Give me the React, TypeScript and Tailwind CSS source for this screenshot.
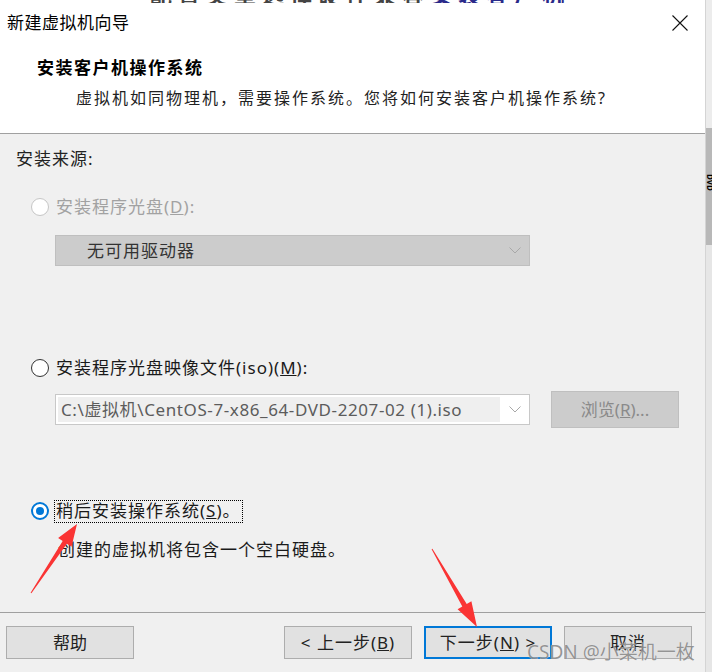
import React from "react";

const CJK = "font-['Noto_Sans','Noto_Sans_CJK_SC',sans-serif]";

function Radio({ state }: { state: "disabled" | "off" | "on" }) {
  if (state === "on")
    return (
      <div className="w-[18px] h-[18px] rounded-full border-2 border-[#0078d7] bg-white flex items-center justify-center shrink-0">
        <div className="w-[8px] h-[8px] rounded-full bg-[#0078d7]" />
      </div>
    );
  return (
    <div
      className={
        "w-[18px] h-[18px] rounded-full bg-white shrink-0 " +
        (state === "disabled" ? "border border-[#c6c6c6]" : "border-[1.5px] border-[#333333]")
      }
    />
  );
}

function Chevron({ color }: { color: string }) {
  return (
    <svg width="12" height="7" viewBox="0 0 12 7" className="shrink-0">
      <polyline points="0.5,0.5 6,6 11.5,0.5" fill="none" stroke={color} strokeWidth="1" />
    </svg>
  );
}

export default function App() {
  return (
    <div className={"relative w-[712px] h-[672px] overflow-hidden flex bg-white text-[17px] " + CJK}>
      {/* main window */}
      <div className="w-[705px] h-full flex flex-col shrink-0">
        {/* background text strip */}
        <div className="h-[3px] overflow-hidden bg-white">
          <div className="-mt-[17px] pl-[150px] text-[22px] font-bold leading-[22px] tracking-[6px] whitespace-nowrap">
            <span className="text-[#444]">配置类型选择硬件兼容</span>
            <span className="text-[#2a2a8a]">安装客户机</span>
          </div>
        </div>
        {/* title + header */}
        <div className="h-[131px] bg-white border-b border-[#a0a0a0] flex flex-col">
          <div className="h-[40px] flex items-center justify-between pl-[7px] pr-[17px]">
            <span className="text-[17px] text-black tracking-[0.5px]">新建虚拟机向导</span>
            <svg width="16" height="16" viewBox="0 0 16 16">
              <path d="M0.5 0.5 L15.5 15.5 M15.5 0.5 L0.5 15.5" stroke="#111" strokeWidth="1.1" />
            </svg>
          </div>
          <div className="pl-[37px] mt-[14px] text-[17px] font-bold text-black tracking-[1.5px] leading-[22px]">
            安装客户机操作系统
          </div>
          <div className="pl-[76px] mt-[8px] text-[16px] text-[#222] tracking-[2px] leading-[22px]">
            虚拟机如同物理机，需要操作系统。您将如何安装客户机操作系统?
          </div>
        </div>
        {/* body */}
        <div className="h-[479px] bg-[#f0f0f0] border-b border-[#a0a0a0] flex flex-col">
          <div className="pl-[16px] mt-[14px] leading-[22px] text-[#222] tracking-[1px]">安装来源:</div>

          <div className="flex items-center gap-[7px] pl-[31px] mt-[26px] h-[22px]">
            <Radio state="disabled" />
            <span className="text-[#a2a2a2] tracking-[1px]">
              安装程序光盘(<u>D</u>):
            </span>
          </div>
          <div className="ml-[55px] mt-[17px] w-[475px] h-[31px] bg-[#cccccc] border border-[#bfbfbf] flex items-center justify-between pl-[31px] pr-[8px]">
            <span className="text-[#333] tracking-[1px]">无可用驱动器</span>
            <Chevron color="#a8a8a8" />
          </div>

          <div className="flex items-center gap-[7px] pl-[31px] mt-[91px] h-[22px]">
            <Radio state="off" />
            <span className="text-[#1a1a1a] tracking-[1px]">
              安装程序光盘映像文件(iso)(<u>M</u>):
            </span>
          </div>
          <div className="flex items-center mt-[12px] h-[37px]">
            <div className="ml-[55px] w-[475px] h-[31px] bg-white border border-[#c8c8c8] flex items-center pr-[8px]">
              <div className="ml-[2px] w-[442px] h-[25px] bg-[#efefef] flex items-center pl-[3px] text-[#5c5c5c] text-[17px] tracking-[0.6px] whitespace-nowrap overflow-hidden">
                C:\虚拟机\CentOS-7-x86_64-DVD-2207-02 (1).iso
              </div>
              <div className="flex-1" />
              <Chevron color="#a8a8a8" />
            </div>
            <div className="ml-[21px] w-[128px] h-[37px] bg-[#cccccc] border border-[#bfbfbf] flex items-center justify-center text-[#8a8a8a]">
              浏览(<u>R</u>)...
            </div>
          </div>

          <div className="flex items-center gap-[5px] pl-[31px] mt-[71px] h-[24px]">
            <Radio state="on" />
            <span className="border border-dotted border-black px-[1px] h-[23px] flex items-center text-[#1a1a1a] tracking-[1px]">
              稍后安装操作系统(<u>S</u>)。
            </span>
          </div>
          <div className="pl-[58px] mt-[16px] leading-[22px] text-[#1a1a1a] tracking-[1px]">
            创建的虚拟机将包含一个空白硬盘。
          </div>
        </div>
        {/* footer */}
        <div className="flex-1 bg-[#f0f0f0] flex items-start pt-[13px] pl-[6px]">
          <div className="w-[128px] h-[33px] bg-[#e1e1e1] border border-[#adadad] flex items-center justify-center text-[#222]">
            帮助
          </div>
          <div className="ml-[150px] w-[128px] h-[33px] bg-[#e1e1e1] border border-[#adadad] flex items-center justify-center text-[#222] tracking-[1px]">
            &lt; 上一步(<u>B</u>)
          </div>
          <div className="ml-[12px] w-[128px] h-[33px] bg-[#e1e1e1] border-2 border-[#0078d7] flex items-center justify-center text-[#222] tracking-[1px]">
            下一步(<u>N</u>) &gt;
          </div>
          <div className="ml-[12px] w-[128px] h-[33px] bg-[#e1e1e1] border border-[#adadad] flex items-center justify-center text-[#222] tracking-[1px]">
            取消
          </div>
        </div>
      </div>

      {/* right edge strip */}
      <div className="flex-1 flex flex-col border-l border-[#d4d4d4]">
        <div className="h-[128px] bg-[#ececec]" />
        <div className="h-[117px] bg-[#b8b8b8] flex items-start justify-center pt-[46px]">
          <span className="text-[8px] font-bold text-black leading-none [writing-mode:vertical-rl]">DVD</span>
        </div>
        <div className="flex-1 bg-[#e6e6e6]" />
      </div>

      {/* red arrows overlay */}
      <svg className="absolute left-0 top-0 pointer-events-none" width="712" height="672" viewBox="0 0 712 672">
        <polygon
          points="30.6,592.7 62.7,540.9 58.1,537.9 77,524 71.5,546.7 66.9,543.7 31.4,593.3"
          fill="#fa3434"
        />
        <polygon
          points="432.4,548.75 466.7,604.1 471.4,601.35 477,627 457.6,609.35 462.3,606.6 431.6,549.25"
          fill="#fa3434"
        />
      </svg>

      {/* watermark */}
      <div className="absolute left-[527px] top-[639px] text-[19px] leading-[26px] text-[#8c8c8c] opacity-90 whitespace-nowrap font-['Noto_Sans','Noto_Sans_CJK_SC',sans-serif] [text-shadow:0_0_1px_#ffffff]">
        CSDN @小菜机一枚
      </div>
    </div>
  );
}
